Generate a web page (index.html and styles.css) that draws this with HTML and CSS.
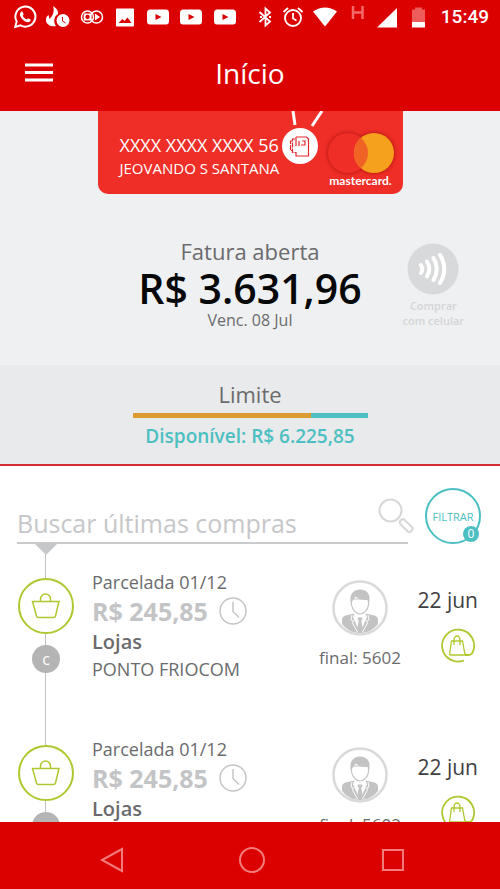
FILE: index.html
```html
<!DOCTYPE html>
<html lang="pt-BR">
<head>
<meta charset="utf-8">
<meta name="viewport" content="width=device-width, initial-scale=1">
<title>Início</title>
<link rel="stylesheet" href="styles.css">
</head>
<body>
<svg class="symbols" aria-hidden="true">
  <symbol id="youtube" viewBox="0 0 24 24"><path fill="#fff" fill-rule="evenodd" d="M4 4.500h16q3 0 3 3.500v8q0 3.500-3 3.500H4q-3 0-3-3.500V8q0-3.500 3-3.500zM9.500 9v6l6-3z"/></symbol>
  <symbol id="basket" viewBox="0 0 56 56"><g fill="none" stroke="#b0c72f" stroke-width="1.500"><circle cx="28" cy="28" r="27" fill="#fff" stroke-width="2"/><path d="M14.500 23.500h26.500l-3.500 14.500q-.5 1.500-2 1.500h-15q-1.500 0-2-1.500zM22.500 23v-2a5 5 0 0 1 10 0v2"/></g></symbol>
  <symbol id="clock" viewBox="0 0 28 28"><g fill="none" stroke="#c4c5c6" stroke-width="1.500"><circle cx="14" cy="14" r="13"/><path d="M14 5v9.500l6 6"/></g></symbol>
  <symbol id="person" viewBox="0 0 56 56">
    <circle cx="28" cy="28" r="26.500" fill="#fff"/>
    <path fill="#c3c3c3" d="M10 44v-4q0-3.500 3.500-4.500l9-2 5.500 19.500 5.500-19.500 9 2q3.500 1 3.500 4.500v4q-7 9-18 9t-18-9z"/>
    <path fill="#fff" d="M22.500 33.500l5.500 4.500 5.500-4.500 1.500 4-7 15-7-15z"/>
    <path fill="#c3c3c3" d="M26 37.500h4l.5 1.500-1.300 2 1.800 8-3 5-3-5 1.800-8-1.300-2z"/>
    <path fill="none" stroke="#fff" d="M20 35l-1 5 2.500 1-1 2 5 9M36 35l1 5-2.500 1 1 2-5 9"/>
    <path fill="#fff" stroke="#c3c3c3" stroke-width="1.200" d="M19.500 19v6c1 5 5 9 8.500 9s8-4 8.500-9v-6z"/>
    <path fill="#c3c3c3" d="M19 24c-2-8 1-14 8.500-14.500 6-.3 10.500 3.500 10 9.500l-.5 5-1.500-4c-6 0-9-1-12-3.500-1.500 3-3.500 3.500-4.500 7.500z"/>
    <circle cx="28" cy="28" r="26.500" fill="none" stroke="#d9d9d9" stroke-width="2.500"/>
  </symbol>
  <symbol id="bag" viewBox="0 0 36 36"><g fill="none" stroke="#b0c72f" stroke-width="1.500"><path stroke-width="1.800" d="M24 32.500a16 16 0 1 1 9-9q-1 3.500-5 3.500h-3"/><path stroke-width="1.300" d="M11.500 13h11l2 11q.3 3 3 3H10.500q-1 0-.8-1.500zM14 17v-5a3 4 0 0 1 6 0v5"/></g></symbol>
</svg>

<header class="header">
  <div class="status">
    <div class="status-left">
      <svg viewBox="0 0 24 24" width="24" height="24"><path fill="none" stroke="#fff" stroke-width="2" d="M2.200 22l1.500-5.500A10 10 0 1 1 7.500 20.300z"/><path fill="#fff" d="M7.500 7.500c.5-1 1.500-1.200 2-.8l1.200 2.600-1 1.500c1 1.800 2.300 3 4 3.800l1.300-1.400 2.700 1.300c.2 1.500-1.200 2.800-2.700 2.800-3.800-.3-7.700-4.600-8-7.300-.1-.9.100-1.800.5-2.500z"/></svg>
      <svg viewBox="0 0 24 24" width="24" height="24"><path fill="#fff" d="M7 1c3 2 5.500 4 5 8-4 2-5 8-2 12-5 1-9-1-10-5-.5-3 1-5 2.500-6l1 4c4-4 5-8 3.500-13z"/><circle cx="17" cy="15.500" r="6.500" fill="#fff"/><path d="M16.500 12v4l3 2" fill="none" stroke="#dc0101"/></svg>
      <svg viewBox="0 0 24 24" width="24" height="24"><g fill="none" stroke="#fff" stroke-width="1.500"><circle cx="7.500" cy="12" r="6"/><circle cx="16.500" cy="12" r="6"/></g><path fill="#fff" fill-rule="evenodd" d="M4 8.500h7q1 3.500 0 7H4q-1-3.500 0-7zM7.500 9.800a2.200 2.200 0 1 0 .1 0z"/><path fill="#fff" d="M15 8.500l5 3.500-5 3.500z"/></svg>
      <svg viewBox="0 0 24 24" width="24" height="24"><path fill="#fff" fill-rule="evenodd" d="M4 3.500h16q1 0 1 1v16q0 1-1 1H4q-1 0-1-1v-16q0-1 1-1zM5.500 18h13l-4-5.500-3 3.500-2-2z"/></svg>
      <svg width="24" height="24"><use href="#youtube"/></svg>
      <svg width="24" height="24"><use href="#youtube"/></svg>
      <svg width="24" height="24"><use href="#youtube"/></svg>
    </div>
    <div class="status-right">
      <svg viewBox="0 0 16 24" width="16" height="24"><path fill="none" stroke="#fff" stroke-width="1.800" d="M2.500 7l10.500 9.500-4.500 4V3.500l4.500 4L2.500 17"/><path fill="#fff" d="M3 11h2v2H3zM12 11h2v2h-2z"/></svg>
      <svg viewBox="0 0 24 24" width="24" height="24"><g fill="none" stroke="#fff" stroke-width="1.800"><circle cx="12" cy="13" r="8"/><path d="M12 8v5.500l3.500 2M2.500 7L7 3M21.500 7L17 3"/></g></svg>
      <svg viewBox="0 0 24 24" width="24" height="24"><path fill="#fff" d="M12 21.500L0 6.500q12-8 24 0z"/></svg>
      <svg viewBox="0 0 24 24" width="24" height="24"><path fill="none" stroke="#f26a6a" stroke-width="2.500" d="M8 1v13M17.500 1v13M8 7.500h9.500"/></svg>
      <svg viewBox="0 0 22 24" width="22" height="24"><path fill="#fff" d="M20 3v19.500H0z"/></svg>
      <svg viewBox="0 0 26 24" width="26" height="24"><path fill="#ee5b5b" d="M8 2.500h7v2h3V17H5V4.500h3z"/><path fill="#fff" d="M5 17h13v5.500H5z"/></svg>
      <span class="time">15:49</span>
    </div>
  </div>
  <div class="toolbar">
    <button class="menu" type="button" aria-label="Menu"><svg viewBox="0 0 28 20" width="28" height="20"><path stroke="#fff" stroke-width="3" d="M0 2h28M0 9.500h28M0 17h28"/></svg></button>
    <h1 class="title">Início</h1>
  </div>
</header>

<main class="content">
  <section class="summary">
    <div class="card">
      <div class="holder">
        <p class="number">XXXX XXXX XXXX 56</p>
        <p class="name">JEOVANDO S SANTANA</p>
      </div>
      <svg class="card-badge" viewBox="0 0 40 54" width="40" height="54"><path stroke="#fff" stroke-width="3" d="M12 0l2 14M41 0L31 15"/><circle cx="19" cy="35" r="18" fill="#fff"/><g fill="none" stroke="#e4292b" stroke-width="1.200"><path d="M15 26h10.500l2 2v17H15v-4M15 26v9"/><path d="M14 28h-2.500v13.500H15M11.500 30H9.500v9.500h2" stroke-dasharray="5 1"/><path d="M21 30h3v4h-4M18 30v5"/></g></svg>
      <div class="brand">
        <svg class="brand-logo" viewBox="0 0 68 42" width="68" height="42"><circle cx="21" cy="21" r="20" fill="#ee2e27"/><circle cx="47" cy="21" r="20" fill="#f6a11d"/><path fill="#f06324" d="M34 5.800a20 20 0 0 1 0 30.400 20 20 0 0 1 0-30.400z"/></svg>
        <span class="brand-name">mastercard.</span>
      </div>
    </div>
    <div class="bill">
      <div class="bill-info">
        <p class="bill-label">Fatura aberta</p>
        <p class="amount">R$ 3.631,96</p>
        <p class="due">Venc. 08 Jul</p>
      </div>
      <button class="contactless" type="button">
        <svg viewBox="0 0 52 52" width="52" height="52"><circle cx="26" cy="26" r="25.500" fill="#d8d9da"/><g fill="none" stroke="#fff" stroke-width="4" stroke-linecap="round"><path d="M14 22q2.500 4 0 8M20 18.500q4.500 7.500 0 15M26.500 15q6.500 11 0 22M33 12q8.500 14 0 28"/></g></svg>
        <span>Comprar<br>com celular</span>
      </button>
    </div>
  </section>

  <section class="limit">
    <h2 class="limit-title">Limite</h2>
    <div class="bar"><div class="bar-used"></div></div>
    <p class="available">Disponível: R$ 6.225,85</p>
  </section>

  <form class="search">
    <div class="field">
      <input type="text" aria-label="Buscar últimas compras" placeholder="Buscar últimas compras">
      <svg class="magnifier" viewBox="0 0 36 36" width="36" height="36"><g fill="none" stroke="#d6d7d8" stroke-width="2"><circle cx="12.500" cy="12.500" r="11"/><rect x="-3" y="-8" width="6" height="15" rx="2.500" transform="translate(28.500 28) rotate(-45)"/></g></svg>
    </div>
    <button class="filter" type="button">FILTRAR<span class="count">0</span></button>
  </form>

  <ul class="purchases">
    <li class="purchase">
      <div class="rail">
        <svg width="56" height="56"><use href="#basket"/></svg>
        <span class="dot">c</span>
      </div>
      <div class="details">
        <p class="parcel">Parcelada 01/12</p>
        <p class="price">R$ 245,85 <svg width="28" height="28"><use href="#clock"/></svg></p>
        <p class="category">Lojas</p>
        <p class="store">PONTO FRIOCOM</p>
      </div>
      <div class="owner">
        <svg width="56" height="56"><use href="#person"/></svg>
        <p>final: 5602</p>
      </div>
      <div class="when">
        <p>22 jun</p>
        <svg width="36" height="36"><use href="#bag"/></svg>
      </div>
    </li>
    <li class="purchase">
      <div class="rail">
        <svg width="56" height="56"><use href="#basket"/></svg>
        <span class="dot">c</span>
      </div>
      <div class="details">
        <p class="parcel">Parcelada 01/12</p>
        <p class="price">R$ 245,85 <svg width="28" height="28"><use href="#clock"/></svg></p>
        <p class="category">Lojas</p>
        <p class="store">PONTO FRIOCOM</p>
      </div>
      <div class="owner">
        <svg width="56" height="56"><use href="#person"/></svg>
        <p>final: 5602</p>
      </div>
      <div class="when">
        <p>22 jun</p>
        <svg width="36" height="36"><use href="#bag"/></svg>
      </div>
    </li>
  </ul>
</main>

<nav class="navbar">
  <button type="button" aria-label="Voltar"><svg viewBox="0 0 28 28" width="28" height="28"><path fill="none" stroke="#f37b7b" stroke-width="2" d="M26 3v22L6 14z"/></svg></button>
  <button type="button" aria-label="Tela inicial"><svg viewBox="0 0 28 28" width="28" height="28"><circle cx="14" cy="14" r="12" fill="none" stroke="#f37b7b" stroke-width="2"/></svg></button>
  <button type="button" aria-label="Recentes"><svg viewBox="0 0 28 28" width="28" height="28"><path fill="none" stroke="#f37b7b" stroke-width="2" d="M4 4h20v20H4z"/></svg></button>
</nav>
</body>
</html>
```
FILE: styles.css
```css
* {
  box-sizing: border-box;
}

body {
  display: flex;
  flex-direction: column;
  height: 100vh;
  margin: 0;
  background: #fff;
  color: #6a6b6d;
  font-family: "Open Sans", "Noto Sans", sans-serif;
}

h1, h2, p, ul {
  margin: 0;
  padding: 0;
  font-weight: 400;
}

button {
  padding: 0;
  border: 0;
  background: none;
  font: inherit;
}

svg {
  display: block;
  flex: none;
}

.symbols {
  position: absolute;
  width: 0;
  height: 0;
}

/* Header */
.header {
  flex: none;
  background: #dc0101;
  color: #fff;
}

.status {
  display: flex;
  justify-content: space-between;
  height: 34px;
  padding: 5px 11px 5px 13px;
}

.status-left {
  display: flex;
  justify-content: space-between;
  width: 47%;
}

.status-right {
  display: flex;
  gap: 8px;
}

.time {
  font: 500 19px/24px Roboto, sans-serif;
}

.toolbar {
  display: grid;
  grid-template-columns: 1fr auto 1fr;
  align-items: center;
  height: 77px;
  padding: 0 25px;
}

.menu {
  justify-self: start;
}

.title {
  font-size: 28px;
  line-height: 38px;
}

.content {
  flex: 1;
  min-height: 0;
  overflow: hidden;
}

/* Open bill */
.summary {
  padding-bottom: 35px;
  background: #eff0f2;
}

.card {
  position: relative;
  display: flex;
  justify-content: space-between;
  width: 61%;
  margin: 0 auto 42px;
  padding: 21px 8px 6px 22px;
  border-radius: 0 0 10px 10px;
  background: #ee2e27;
  color: #fff;
}

.number {
  font-size: 18px;
  line-height: 26px;
}

.name {
  font-size: 15px;
  line-height: 20px;
}

.card-badge {
  position: absolute;
  top: 0;
  right: 82px;
  overflow: visible;
}

.brand {
  display: flex;
  flex-direction: column;
  align-items: center;
}

.brand-logo {
  overflow: visible;
  filter: drop-shadow(0 0 2px #a8100c);
}

.brand-name {
  font: 700 12px/14px Lato, sans-serif;
}

.bill {
  display: grid;
  grid-template-columns: 1fr auto 1fr;
  text-align: center;
}

.bill-info {
  grid-column: 2;
}

.bill-label {
  font-size: 22px;
  line-height: 30px;
}

.amount {
  color: #060708;
  font-size: 41px;
  font-weight: 600;
  line-height: 44px;
}

.due {
  font-size: 16px;
  line-height: 20px;
}

.contactless {
  display: flex;
  flex-direction: column;
  align-items: center;
  padding: 7px 0 0 5px;
  color: #d4d5d7;
  font-size: 11px;
  font-weight: 600;
  line-height: 15px;
}

.contactless span {
  margin-top: 3px;
}

/* Limit */
.limit {
  padding: 14px 0 15px;
  border-bottom: 2px solid #d52b34;
  background: #e9eaeb;
  text-align: center;
}

.limit-title {
  font-size: 22px;
  line-height: 30px;
}

.bar {
  width: 47%;
  height: 5px;
  margin: 4px auto 5px;
  background: #4cbfc2;
}

.bar-used {
  width: 76%;
  height: 100%;
  background: #dd9c32;
}

.available {
  color: #4cbfc2;
  font-size: 19px;
  font-weight: 600;
  line-height: 26px;
}

/* Search */
.search {
  display: flex;
  align-items: flex-end;
  gap: 17px;
  padding: 22px 19px 0 17px;
}

.field {
  position: relative;
  flex: 1;
}

.field input {
  display: block;
  width: 100%;
  height: 41px;
  padding: 0 36px 0 0;
  border: 0;
  border-bottom: 2px solid #c9cacb;
  background: none;
  color: #6a6b6d;
  font: 400 25px/36px "Open Sans", "Noto Sans", sans-serif;
}

.field input::placeholder {
  color: #c6c7c9;
}

.magnifier {
  position: absolute;
  right: -6px;
  bottom: 10px;
}

.filter {
  position: relative;
  width: 56px;
  height: 56px;
  border: 2px solid #4cbfc2;
  border-radius: 50%;
  color: #4cbfc2;
  font-size: 11px;
}

.count {
  position: absolute;
  right: 0;
  bottom: 0;
  width: 16px;
  height: 16px;
  border-radius: 50%;
  background: #4cbfc2;
  color: #fff;
  font-size: 12px;
  line-height: 16px;
}

/* Purchases */
.purchases {
  position: relative;
  padding-top: 25px;
  list-style: none;
}

.purchases::before {
  content: "";
  position: absolute;
  top: -1px;
  left: 34px;
  border: solid transparent;
  border-width: 12px 12px 0;
  border-top-color: #c6c7c9;
}

.purchases::after {
  content: "";
  position: absolute;
  z-index: -1;
  top: 0;
  bottom: 0;
  left: 45px;
  width: 1px;
  background: #bfc0c1;
}

.purchase {
  display: grid;
  grid-template-columns: 56px 1fr 84px 76px;
  height: 167px;
  padding: 0 22px 0 18px;
}

.rail {
  display: flex;
  flex-direction: column;
  align-items: center;
  gap: 11px;
  padding-top: 9px;
}

.dot {
  width: 28px;
  height: 28px;
  border-radius: 50%;
  background: #b4b4b5;
  color: #fff;
  font-size: 16px;
  line-height: 28px;
  text-align: center;
}

.details {
  padding-left: 18px;
}

.parcel {
  font-size: 18px;
  line-height: 26px;
}

.price {
  display: flex;
  align-items: center;
  gap: 11px;
  color: #c3c4c6;
  font-size: 25px;
  font-weight: 700;
  line-height: 32px;
}

.category {
  font-size: 20px;
  font-weight: 600;
  line-height: 30px;
}

.store {
  font-size: 18px;
  line-height: 24px;
}

.owner {
  display: flex;
  flex-direction: column;
  align-items: center;
  gap: 10px;
  padding-top: 11px;
  font-size: 17px;
  line-height: 24px;
  white-space: nowrap;
}

.when {
  display: flex;
  flex-direction: column;
  align-items: flex-end;
  gap: 13px;
  padding-top: 16px;
  color: #3f4042;
  font-size: 21px;
  line-height: 30px;
  white-space: nowrap;
}

.when svg {
  margin-right: 2px;
}

/* System navigation */
.navbar {
  display: flex;
  flex: none;
  align-items: center;
  justify-content: space-between;
  height: 67px;
  padding: 8px 93px 0 96px;
  background: #dc0101;
}
```
